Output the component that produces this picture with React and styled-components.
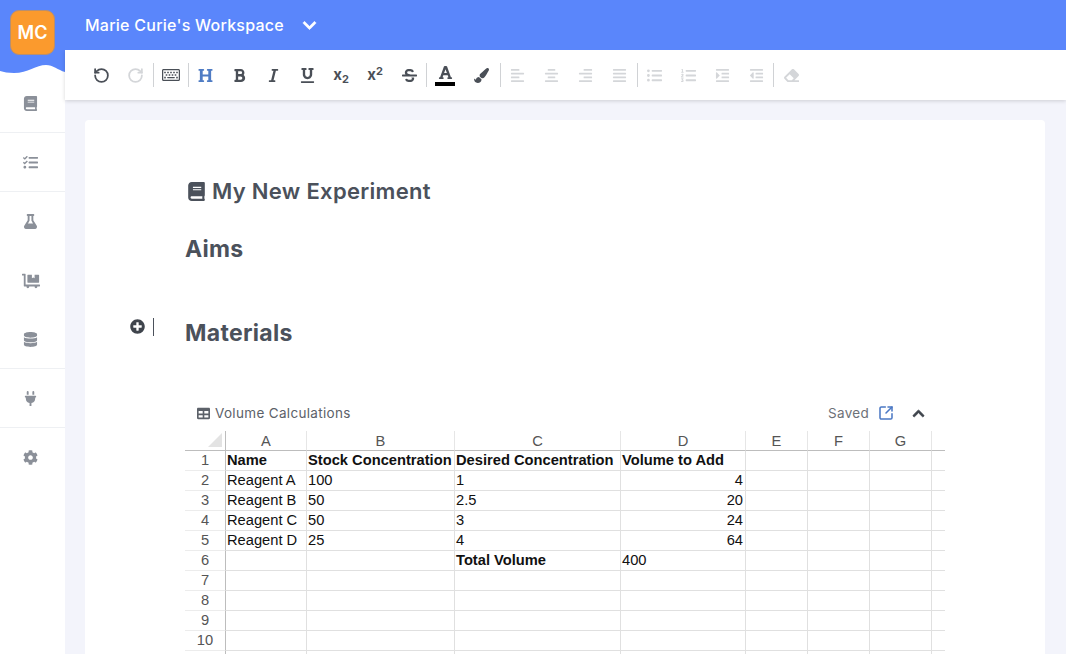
import React from 'react';
import styled, {createGlobalStyle} from 'styled-components';
import {
  FaBook,
  FaTasks,
  FaFlask,
  FaDollyFlatbed,
  FaDatabase,
  FaPlug,
  FaCog,
  FaRegKeyboard,
  FaHeading,
  FaBold,
  FaItalic,
  FaUnderline,
  FaStrikethrough,
  FaFont,
  FaPaintBrush,
  FaAlignLeft,
  FaAlignCenter,
  FaAlignRight,
  FaAlignJustify,
  FaListUl,
  FaListOl,
  FaIndent,
  FaOutdent,
  FaEraser,
  FaPlusCircle,
  FaTable,
  FaChevronUp,
  FaChevronDown,
} from 'react-icons/fa';
import {RotateCcw, RotateCw, SquareArrowOutUpRight} from 'lucide-react';

const GlobalStyle = createGlobalStyle`
  html, body {
    margin: 0;
    height: 654px;
    overflow: hidden;
    background: #f3f4fb;
    font-family: Inter, "Open Sans", sans-serif;
  }
`;

const BLUE = '#5a86fb';
const HEADING = '#4b515b';

const Header = styled.header`
  display: flex;
  height: 50px;
  background: ${BLUE};
  padding-left: 10px;
  position: relative;
  z-index: 2;
`;

const Logo = styled.div`
  width: 45px;
  height: 45px;
  margin-top: 10px;
  box-sizing: border-box;
  border: 1px solid #b98f6e;
  border-radius: 9px;
  background: #fb9a2d;
  color: #fff;
  font-size: 18px;
  font-weight: 600;
  display: flex;
  align-items: center;
  justify-content: center;
`;

const Workspace = styled.div`
  display: flex;
  align-items: center;
  margin-left: 30px;
  color: #fff;
  font-size: 16px;
  font-weight: 500;
  letter-spacing: 0.25px;
  gap: 18px;
  svg {
    stroke-width: 20;
  }
`;

const Shell = styled.div`
  display: flex;
  height: 604px;
`;

const Sidebar = styled.nav`
  width: 65px;
  flex: none;
  background: #fff;
`;

const Wave = styled.svg`
  display: block;
`;

const NavItem = styled.div`
  height: 59px;
  box-sizing: border-box;
  display: flex;
  align-items: center;
  justify-content: center;
  padding: 1px 4px 0 0;
  color: #8b9099;
  border-bottom: 1px solid ${props => (props.$line ? '#eef0f3' : 'transparent')};
`;

const Main = styled.main`
  flex: 1;
  min-width: 0;
  display: flex;
  flex-direction: column;
`;

const Toolbar = styled.div`
  height: 50px;
  flex: none;
  box-sizing: border-box;
  background: #fff;
  box-shadow: 0 1px 4px rgba(0, 0, 0, 0.16);
  display: flex;
  align-items: center;
  padding-left: 19px;
  position: relative;
`;

const ToolButton = styled.div`
  width: ${props => props.$w || 34}px;
  height: 34px;
  flex: none;
  display: flex;
  flex-direction: column;
  align-items: center;
  justify-content: center;
  color: ${props => (props.$off ? '#d4d6d9' : props.$on ? '#4f7cc4' : '#4a4f57')};
  font-size: ${props => props.$size || 15}px;
`;

const ToolSep = styled.div`
  width: 1px;
  height: 24px;
  flex: none;
  background: #d0d2d5;
  margin-left: ${props => props.$left || 0}px;
  margin-right: ${props => props.$right || 0}px;
`;

const ColorBar = styled.div`
  width: 20px;
  height: 4px;
  margin-top: 2px;
  background: #000;
`;

const Script = styled.span`
  font-size: 15px;
  font-weight: 700;
  line-height: 16px;
  sub,
  sup {
    font-size: 11px;
    line-height: 0;
  }
  sub {
    vertical-align: -3px;
  }
  sup {
    vertical-align: 5px;
  }
`;

const Content = styled.div`
  flex: 1;
  min-height: 0;
  padding: 20px 21px 0 20px;
`;

const Card = styled.div`
  height: 100%;
  background: #fff;
  border-radius: 4px 4px 0 0;
  padding: 56px 100px 0 100px;
  box-sizing: border-box;
`;

const Title = styled.h1`
  margin: 0 0 0 2px;
  height: 30px;
  display: flex;
  align-items: center;
  gap: 6px;
  color: ${HEADING};
  font-size: 22px;
  font-weight: 600;
  letter-spacing: 0.3px;
  svg {
    font-size: 19px;
  }
`;

const Heading = styled.h2`
  margin: ${props => props.$top}px 0 0;
  height: 30px;
  line-height: 32px;
  color: ${HEADING};
  font-size: 23px;
  font-weight: 700;
  letter-spacing: 0.3px;
  position: relative;
`;

const BlockHandle = styled.div`
  position: absolute;
  left: -55px;
  top: 0;
  display: flex;
  align-items: center;
  gap: 8px;
  color: #3f444c;
  font-size: 15px;
`;

const Caret = styled.span`
  width: 1px;
  height: 18px;
  margin-top: 1px;
  background: #4b515b;
`;

const SheetBar = styled.div`
  margin-top: 51px;
  width: 760px;
  height: 33px;
  display: flex;
  align-items: center;
  padding: 0 20px 3px 12px;
  box-sizing: border-box;
  color: #5c6169;
  font-size: 13.5px;
`;

const SheetName = styled.div`
  display: flex;
  align-items: center;
  gap: 5px;
  flex: 1;
  letter-spacing: 0.32px;
`;

const SheetActions = styled.div`
  display: flex;
  align-items: center;
  color: #6d7177;
  letter-spacing: 0.3px;
`;

const OpenIcon = styled(SquareArrowOutUpRight)`
  margin-left: 9px;
  color: #4b78c4;
`;

const Collapse = styled.span`
  display: flex;
  margin-left: 18px;
  color: #3f444c;
  font-size: 13px;
  svg {
    stroke-width: 30;
  }
`;

const Sheet = styled.table`
  width: 760px;
  table-layout: fixed;
  border-collapse: separate;
  border-spacing: 0;
  font-family: "Liberation Sans", Arial, sans-serif;
  font-size: 14.7px;
  color: #111;
`;

const Th = styled.th`
  height: 19px;
  padding: 0;
  font-weight: 400;
  color: #555;
  text-align: center;
  border-bottom: 1px solid #bdbdbd;
  border-right: 1px solid #e6e6e6;
  &:last-child {
    border-right: 0;
  }
`;

const Corner = styled(Th)`
  border-right: 1px solid #bdbdbd;
  position: relative;
`;

const CornerMark = styled.span`
  position: absolute;
  right: 3px;
  bottom: 3px;
  width: 0;
  height: 0;
  border-style: solid;
  border-width: 0 0 14px 14px;
  border-color: transparent transparent #e3e3e3 transparent;
`;

const RowHead = styled.td`
  height: 18px;
  padding: 0 0 1px;
  color: #555;
  text-align: center;
  border-bottom: 1px solid #ececec;
  border-right: 1px solid #bdbdbd;
`;

const Cell = styled.td`
  height: 18px;
  padding: 0 2px 1px 1px;
  white-space: nowrap;
  overflow: hidden;
  font-weight: ${props => (props.$bold ? 700 : 400)};
  text-align: ${props => (props.$right ? 'right' : 'left')};
  border-bottom: 1px solid #e0e0e0;
  border-right: 1px solid #e0e0e0;
  &:last-child {
    border-right: 0;
  }
`;

const COLUMNS = [
  ['', 41],
  ['A', 81],
  ['B', 148],
  ['C', 166],
  ['D', 125],
  ['E', 62],
  ['F', 62],
  ['G', 62],
  ['', 13],
];

const ROWS = [
  [{v: 'Name', bold: true}, {v: 'Stock Concentration', bold: true}, {v: 'Desired Concentration', bold: true}, {v: 'Volume to Add', bold: true}],
  [{v: 'Reagent A'}, {v: '100'}, {v: '1'}, {v: '4', right: true}],
  [{v: 'Reagent B'}, {v: '50'}, {v: '2.5'}, {v: '20', right: true}],
  [{v: 'Reagent C'}, {v: '50'}, {v: '3'}, {v: '24', right: true}],
  [{v: 'Reagent D'}, {v: '25'}, {v: '4'}, {v: '64', right: true}],
  [{}, {}, {v: 'Total Volume', bold: true}, {v: '400'}],
  [],
  [],
  [],
  [],
  [],
];

const NAV = [
  {icon: FaBook, size: 15, line: true},
  {icon: FaTasks, size: 15, line: true},
  {icon: FaFlask, size: 15},
  {icon: FaDollyFlatbed, size: 18},
  {icon: FaDatabase, size: 15, line: true},
  {icon: FaPlug, size: 15, line: true},
  {icon: FaCog, size: 15},
];

export default function App() {
  return (
    <>
      <GlobalStyle />
      <Header>
        <Logo>MC</Logo>
        <Workspace>
          Marie Curie's Workspace
          <FaChevronDown size={15} />
        </Workspace>
      </Header>
      <Shell>
        <Sidebar>
          <Wave width="65" height="24" viewBox="0 0 65 24">
            <path d="M0 0H65V22C58 20 53 15 46 15C36 15 28 23 14 23C8 23 4 22 0 21Z" fill={BLUE} />
          </Wave>
          {NAV.map((item, i) => (
            <NavItem key={i} $line={item.line}>
              <item.icon size={item.size} />
            </NavItem>
          ))}
        </Sidebar>
        <Main>
          <Toolbar>
            <ToolButton><RotateCcw size={17} strokeWidth={2.5} /></ToolButton>
            <ToolButton $off><RotateCw size={17} strokeWidth={2.5} /></ToolButton>
            <ToolSep $left={1} />
            <ToolButton $size={18}><FaRegKeyboard /></ToolButton>
            <ToolSep $right={-1} />
            <ToolButton $on><FaHeading /></ToolButton>
            <ToolButton><FaBold /></ToolButton>
            <ToolButton><FaItalic /></ToolButton>
            <ToolButton><FaUnderline /></ToolButton>
            <ToolButton><Script>x<sub>2</sub></Script></ToolButton>
            <ToolButton><Script>x<sup>2</sup></Script></ToolButton>
            <ToolButton><FaStrikethrough /></ToolButton>
            <ToolSep />
            <ToolButton $w={36}><FaFont /><ColorBar /></ToolButton>
            <ToolButton $w={36}><FaPaintBrush /></ToolButton>
            <ToolSep $left={1} $right={-1} />
            <ToolButton $off><FaAlignLeft /></ToolButton>
            <ToolButton $off><FaAlignCenter /></ToolButton>
            <ToolButton $off><FaAlignRight /></ToolButton>
            <ToolButton $off><FaAlignJustify /></ToolButton>
            <ToolSep $left={1} $right={-1} />
            <ToolButton $off><FaListUl /></ToolButton>
            <ToolButton $off><FaListOl /></ToolButton>
            <ToolButton $off><FaIndent /></ToolButton>
            <ToolButton $off><FaOutdent /></ToolButton>
            <ToolSep />
            <ToolButton $off><FaEraser /></ToolButton>
          </Toolbar>
          <Content>
            <Card>
              <Title>
                <FaBook />
                My New Experiment
              </Title>
              <Heading $top={27}>Aims</Heading>
              <Heading $top={54}>
                <BlockHandle>
                  <FaPlusCircle />
                  <Caret />
                </BlockHandle>
                Materials
              </Heading>
              <SheetBar>
                <SheetName>
                  <FaTable size={13} />
                  Volume Calculations
                </SheetName>
                <SheetActions>
                  Saved
                  <OpenIcon size={16} strokeWidth={2.3} />
                  <Collapse><FaChevronUp /></Collapse>
                </SheetActions>
              </SheetBar>
              <Sheet>
                <colgroup>
                  {COLUMNS.map(([name, width], i) => (
                    <col key={i} width={width} />
                  ))}
                </colgroup>
                <thead>
                  <tr>
                    {COLUMNS.map(([name], i) =>
                      i === 0 ? (
                        <Corner key={i}><CornerMark /></Corner>
                      ) : (
                        <Th key={i}>{name}</Th>
                      )
                    )}
                  </tr>
                </thead>
                <tbody>
                  {ROWS.map((row, r) => (
                    <tr key={r}>
                      <RowHead>{r < 10 ? r + 1 : ''}</RowHead>
                      {COLUMNS.slice(1).map((col, c) => {
                        const cell = row[c] || {};
                        return (
                          <Cell key={c} $bold={cell.bold} $right={cell.right}>
                            {cell.v}
                          </Cell>
                        );
                      })}
                    </tr>
                  ))}
                </tbody>
              </Sheet>
            </Card>
          </Content>
        </Main>
      </Shell>
    </>
  );
}
